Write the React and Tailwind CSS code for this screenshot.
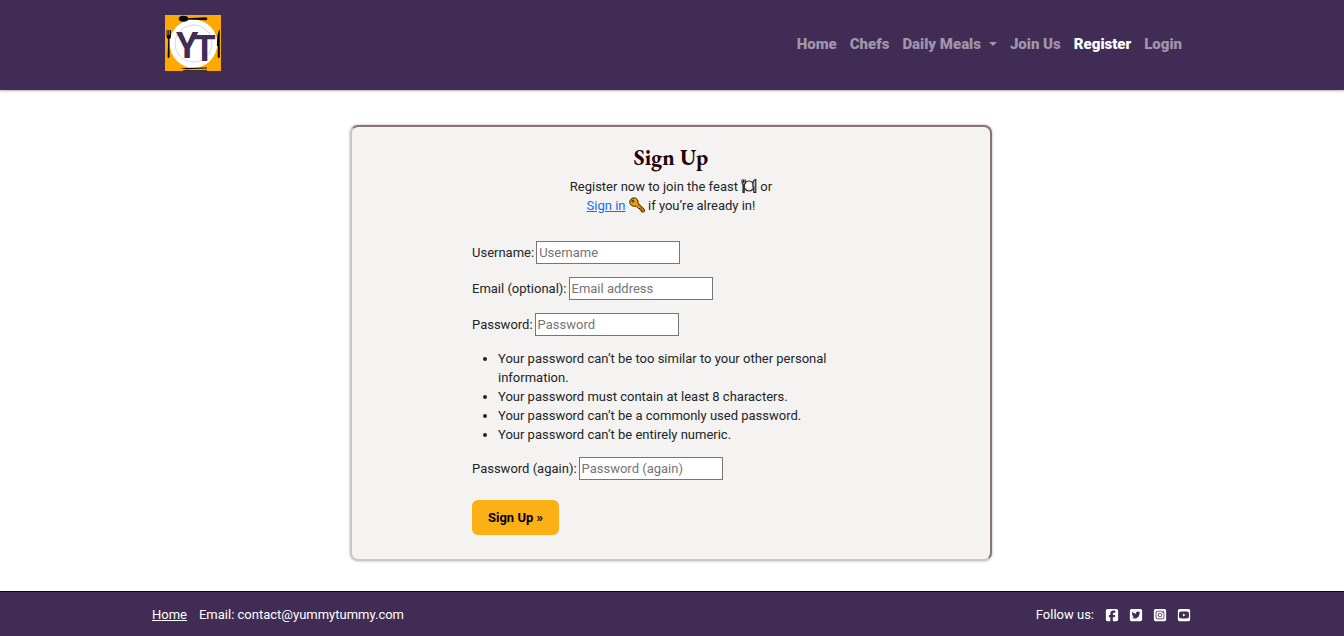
import React from 'react';
import { FaSquareFacebook, FaSquareTwitter, FaSquareInstagram, FaSquareYoutube } from 'react-icons/fa6';

function Logo() {
  return (
    <svg viewBox="0 0 56 56" className="block size-14 overflow-visible" role="img" aria-label="YummyTummy">
      <rect width="56" height="56" fill="#ffa800" />
      <ellipse cx="28.5" cy="28.6" rx="23.8" ry="24.2" fill="#fff" />
      <circle cx="28.5" cy="28.5" r="18.5" fill="none" stroke="#b9bcc0" strokeWidth="0.6" />
      <ellipse cx="18.5" cy="3.8" rx="4.8" ry="3" fill="#0b0808" />
      <path d="M22 3.200 L41 2.200 Q43.800 3.800 41 5.200 L22 4.500Z" fill="#0b0808" />
      <path d="M1.600 15 V21 Q1.600 23.500 3.200 24.200 L2.600 42 Q3.600 44 4.600 42 L4.400 24.200 Q6 23.500 6 21 V15 H5.100 V20 H4.400 V15 H3.300 V20 H2.500 V15Z" fill="#0b0808" />
      <path d="M54.800 14 Q51.800 18 51.900 31 H53 L52.600 42 Q53.800 44 54.800 42Z" fill="#0b0808" />
      <path d="M15 53.200 L42 52.400 V53.400 L21 54.200Z M17 55 H42 V55.700 H19Z" fill="#0b0808" />
      <text x="11" y="43" fontFamily="Roboto, sans-serif" fontWeight="700" fontSize="36" fill="#412c56">
        Y<tspan dx="-5" dy="3">T</tspan>
      </text>
    </svg>
  );
}

function PlateIcon() {
  return (
    <svg viewBox="0 0 16 16" className="inline-block size-4 align-text-bottom" fill="none" aria-hidden="true">
      <circle cx="8" cy="8" r="5" fill="#fff" stroke="#222" strokeWidth="1.2" />
      <circle cx="8" cy="8" r="3.400" stroke="#ccc" strokeWidth="0.6" />
      <path d="M1 1.500 V4.500 Q1 6 2 6.500 V14.500 H3.200 V6.500 Q4.300 6 4.300 4.500 V1.500 M2.600 1.500 V5" fill="#bbb" stroke="#222" strokeWidth="1.1" />
      <path d="M12.800 14.500 V9 H11.900 V5 Q12.200 2 14.800 1.500 V14.500Z" fill="#bbb" stroke="#222" strokeWidth="1.1" />
    </svg>
  );
}

function KeyIcon() {
  return (
    <svg viewBox="0 0 16 16" className="inline-block size-4 align-text-bottom" aria-hidden="true">
      <path fillRule="evenodd" d="M1.800 2.200 Q4 .200 6.700 1.100 Q9.600 2.500 9.100 6.200 L15.300 12.300 V14.900 H12.600 V13.200 H11 V11.500 H9.400 L7.300 9.300 H5.300 Q2.200 9.300 1 6.700 Q.200 4 1.800 2.200Z M3 3.300 V4.900 H4.700 V3.300Z" fill="#eda000" stroke="#382a10" strokeWidth="1" strokeLinejoin="round" />
      <path d="M8.300 7 L14.400 13.200" stroke="#5b3b00" strokeWidth="0.7" />
    </svg>
  );
}

const links = ['Home', 'Chefs', 'Daily Meals', 'Join Us', 'Register', 'Login'];

function NavLink({ name }) {
  if (name === 'Daily Meals') {
    return (
      <button type="button" aria-haspopup="true" className="flex items-center gap-2 text-[#a095aa]">
        {name}
        <span className="border-x-4 border-t-4 border-x-transparent border-t-current" />
      </button>
    );
  }
  return (
    <a href="#" className={name === 'Register' ? 'text-white' : 'text-[#a095aa]'}>{name}</a>
  );
}

function Field({ id, label, type = 'text', placeholder }) {
  return (
    <div className="flex items-center gap-0.5">
      <label htmlFor={id}>{label}</label>
      <input
        id={id}
        type={type}
        placeholder={placeholder}
        className="h-[23px] w-36 border border-[#767676] bg-white px-0.5 placeholder:text-[#757575]"
      />
    </div>
  );
}

const rules = [
  'Your password can’t be too similar to your other personal information.',
  'Your password must contain at least 8 characters.',
  'Your password can’t be a commonly used password.',
  'Your password can’t be entirely numeric.',
];

const socials = [
  ['Facebook', FaSquareFacebook],
  ['Twitter', FaSquareTwitter],
  ['Instagram', FaSquareInstagram],
  ['YouTube', FaSquareYoutube],
];

export default function App() {
  return (
    <div className="flex min-h-screen flex-col bg-white font-[Roboto,sans-serif] text-[13px] leading-[19px] text-[#212529]">
      <header className="bg-[#412c56] pt-[15px] pb-[19px] shadow-[0_1px_2px_#8d7b7899]">
        <div className="mx-auto flex max-w-[1040px] items-center justify-between pr-2.5 pl-[13px]">
          <a href="#"><Logo /></a>
          <nav className="flex items-center gap-[13px] pt-0.5 text-[15px] leading-6 font-black">
            {links.map((name) => <NavLink key={name} name={name} />)}
          </nav>
        </div>
      </header>

      <main className="flex grow flex-col items-center pt-[35px] pr-[18px] pb-[30px] pl-4">
        <section className="w-full max-w-[642px] rounded-lg border-2 border-t-[#857574] border-r-[#857574] border-b-[#cbc6c5] border-l-[#cbc6c5] bg-[#f4f3f1] px-[120px] pt-[17px] pb-6 shadow-[0_0_3px_#8d7b7899]">
          <h1 className="text-center font-['EB_Garamond','Liberation_Serif',serif] text-[22px] leading-7 font-bold text-[#230007]">Sign Up</h1>
          <p className="mt-[5px] text-center">
            Register now to join the feast <PlateIcon /> or<br />
            <a href="#" className="text-[#0d6efd] underline">Sign in</a> <KeyIcon /> if you’re already in!
          </p>
          <form className="mt-[26px]" onSubmit={(e) => e.preventDefault()}>
            <div className="flex flex-col gap-[13px]">
              <Field id="username" label="Username:" placeholder="Username" />
              <Field id="email" type="email" label="Email (optional):" placeholder="Email address" />
              <Field id="password1" type="password" label="Password:" placeholder="Password" />
              <ul className="list-disc pl-[26px]">
                {rules.map((rule) => <li key={rule}>{rule}</li>)}
              </ul>
              <Field id="password2" type="password" label="Password (again):" placeholder="Password (again)" />
            </div>
            <button type="submit" className="mt-5 rounded-md bg-[#fbb016] px-4 py-2 font-bold text-black">Sign Up »</button>
          </form>
        </section>
      </main>

      <footer className="border-t border-[#230007] bg-[#412c56] pt-[13px] pb-3 text-white">
        <div className="mx-auto flex max-w-[1040px] items-center justify-between">
          <div className="flex gap-3">
            <a href="#" className="underline">Home</a>
            <span>Email: contact@yummytummy.com</span>
          </div>
          <div className="flex items-center gap-3 pr-0.5">
            <span>Follow us:</span>
            {socials.map(([name, Icon]) => (
              <a key={name} href="#" aria-label={name} className="flex w-3 justify-center">
                <Icon className="size-3.5 shrink-0" />
              </a>
            ))}
          </div>
        </div>
      </footer>
    </div>
  );
}
